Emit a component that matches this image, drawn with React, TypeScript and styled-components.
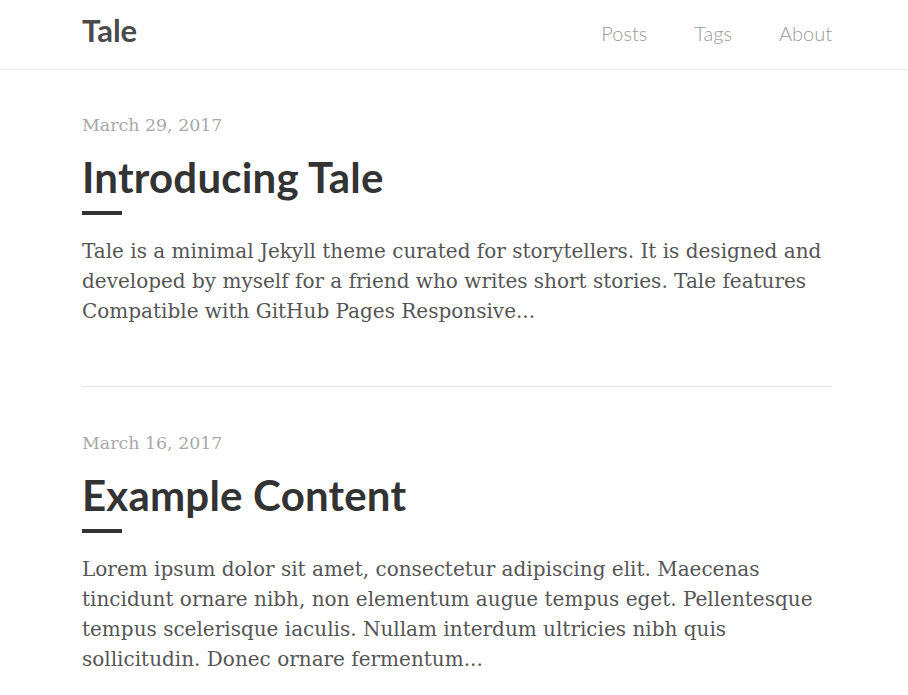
import React from "react";
import styled, { createGlobalStyle } from "styled-components";

const Global = createGlobalStyle`
  html, body { margin: 0; padding: 0; background: #fff; }
  body { font-family: "DejaVu Serif", serif; -webkit-font-smoothing: antialiased; }
`;

const Header = styled.header`
  border-bottom: 1px solid #eaeaea;
  height: 69px;
`;

const Container = styled.div`
  width: 750px;
  margin: 0 auto;
  position: relative;
  left: 3px;
`;

const HeaderInner = styled(Container)`
  height: 100%;
  display: flex;
  align-items: center;
  justify-content: space-between;
  padding-bottom: 4px;
  box-sizing: border-box;
`;

const Logo = styled.a`
  font-family: "Lato", sans-serif;
  font-weight: 700;
  font-size: 31px;
  color: #4a4a4a;
  text-decoration: none;
  margin-top: -6px;
`;

const Nav = styled.nav`
  display: flex;
  gap: 47px;
`;

const NavLink = styled.a`
  font-family: "Lato", sans-serif;
  font-weight: 300;
  font-size: 20px;
  color: #999;
  text-decoration: none;
`;

const Main = styled(Container)`
  padding-top: 40px;
`;

const Post = styled.article`
  padding: 0 0 60px;
  & + & {
    border-top: 1px solid #e6e6e6;
    padding-top: 41px;
  }
`;

const PostDate = styled.div`
  font-size: 17.4px;
  line-height: 30px;
  color: #a8a8a8;
`;

const Title = styled.h2`
  font-family: "Lato", sans-serif;
  font-weight: 700;
  font-size: 42px;
  letter-spacing: 0.2px;
  line-height: 52px;
  color: #333;
  margin: 11px 0 0;
  &::after {
    content: "";
    display: block;
    width: 40px;
    height: 4px;
    background: #333;
    margin-top: 8px;
  }
`;

const Excerpt = styled.p`
  font-size: 20px;
  line-height: 30px;
  color: #555;
  margin: 21px 0 0;
`;

const posts = [
  {
    date: "March 29, 2017",
    title: "Introducing Tale",
    excerpt:
      "Tale is a minimal Jekyll theme curated for storytellers. It is designed and developed by myself for a friend who writes short stories. Tale features Compatible with GitHub Pages Responsive...",
  },
  {
    date: "March 16, 2017",
    title: "Example Content",
    excerpt:
      "Lorem ipsum dolor sit amet, consectetur adipiscing elit. Maecenas tincidunt ornare nibh, non elementum augue tempus eget. Pellentesque tempus scelerisque iaculis. Nullam interdum ultricies nibh quis sollicitudin. Donec ornare fermentum...",
  },
];

export default function App() {
  return (
    <>
      <Global />
      <Header>
        <HeaderInner>
          <Logo href="#">Tale</Logo>
          <Nav>
            <NavLink href="#">Posts</NavLink>
            <NavLink href="#">Tags</NavLink>
            <NavLink href="#">About</NavLink>
          </Nav>
        </HeaderInner>
      </Header>
      <Main>
        {posts.map((p) => (
          <Post key={p.title}>
            <PostDate>{p.date}</PostDate>
            <Title>{p.title}</Title>
            <Excerpt>{p.excerpt}</Excerpt>
          </Post>
        ))}
      </Main>
    </>
  );
}
